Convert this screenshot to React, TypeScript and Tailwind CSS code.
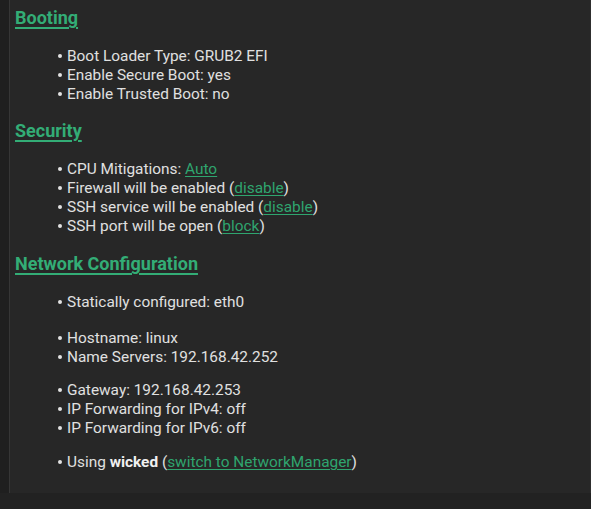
import React from "react";

const Link = ({ children }: { children: React.ReactNode }) => (
  <span className="text-[#2fa56f] underline underline-offset-2 decoration-1">{children}</span>
);

const Item = ({ children }: { children: React.ReactNode }) => (
  <li className="flex items-center h-[19px] leading-[19px]">
    <span className="w-[9px] shrink-0 flex items-center">
      <span className="w-[4px] h-[4px] rounded-full bg-[#e2e2e2] -mt-[1px]" />
    </span>
    <span className="whitespace-nowrap">{children}</span>
  </li>
);

const Heading = ({ children, className = "" }: { children: React.ReactNode; className?: string }) => (
  <h2
    className={`${className} text-[18px] leading-[22px] font-bold text-[#33ad76] underline underline-offset-[3px] decoration-[1.5px]`}
  >
    {children}
  </h2>
);

const List = ({ children, className = "mt-[17px]" }: { children: React.ReactNode; className?: string }) => (
  <ul className={`${className} pl-[43px] text-[15.4px] text-[#e0e0e0]`}>{children}</ul>
);

export default function App() {
  return (
    <div
      className="w-[591px] h-[509px] bg-[#272727] flex flex-col overflow-hidden"
      style={{ fontFamily: "Roboto, 'Noto Sans', sans-serif" }}
    >
      <div className="flex flex-1 min-h-0">
        <div className="w-[10px] bg-[#1f1f1f] border-r border-[#363636] shrink-0" />
        <div className="flex-1 pl-[5px] pt-[7px] overflow-hidden border-r border-[#2e2e2e]">
          <Heading>Booting</Heading>
          <List className="mt-[18px]">
            <Item>Boot Loader Type: GRUB2 EFI</Item>
            <Item>Enable Secure Boot: yes</Item>
            <Item>Enable Trusted Boot: no</Item>
          </List>
          <Heading className="mt-[16px]">Security</Heading>
          <List className="mt-[18px]">
            <Item>
              CPU Mitigations: <Link>Auto</Link>
            </Item>
            <Item>
              Firewall will be enabled (<Link>disable</Link>)
            </Item>
            <Item>
              SSH service will be enabled (<Link>disable</Link>)
            </Item>
            <Item>
              SSH port will be open (<Link>block</Link>)
            </Item>
          </List>
          <Heading className="mt-[17px]">Network Configuration</Heading>
          <List className="mt-[18px]">
            <Item>Statically configured: eth0</Item>
          </List>
          <List className="mt-[17px]">
            <Item>Hostname: linux</Item>
            <Item>Name Servers: 192.168.42.252</Item>
          </List>
          <List className="mt-[14px]">
            <Item>Gateway: 192.168.42.253</Item>
            <Item>IP Forwarding for IPv4: off</Item>
            <Item>IP Forwarding for IPv6: off</Item>
          </List>
          <List className="mt-[15px]">
            <Item>
              Using <b className="font-bold text-[#f0f0f0]">wicked</b> (<Link>switch to NetworkManager</Link>)
            </Item>
          </List>
          <Heading className="mt-[17px]">Users</Heading>
        </div>
      </div>
      <div className="h-[16px] bg-[#222222] shrink-0" />
    </div>
  );
}
